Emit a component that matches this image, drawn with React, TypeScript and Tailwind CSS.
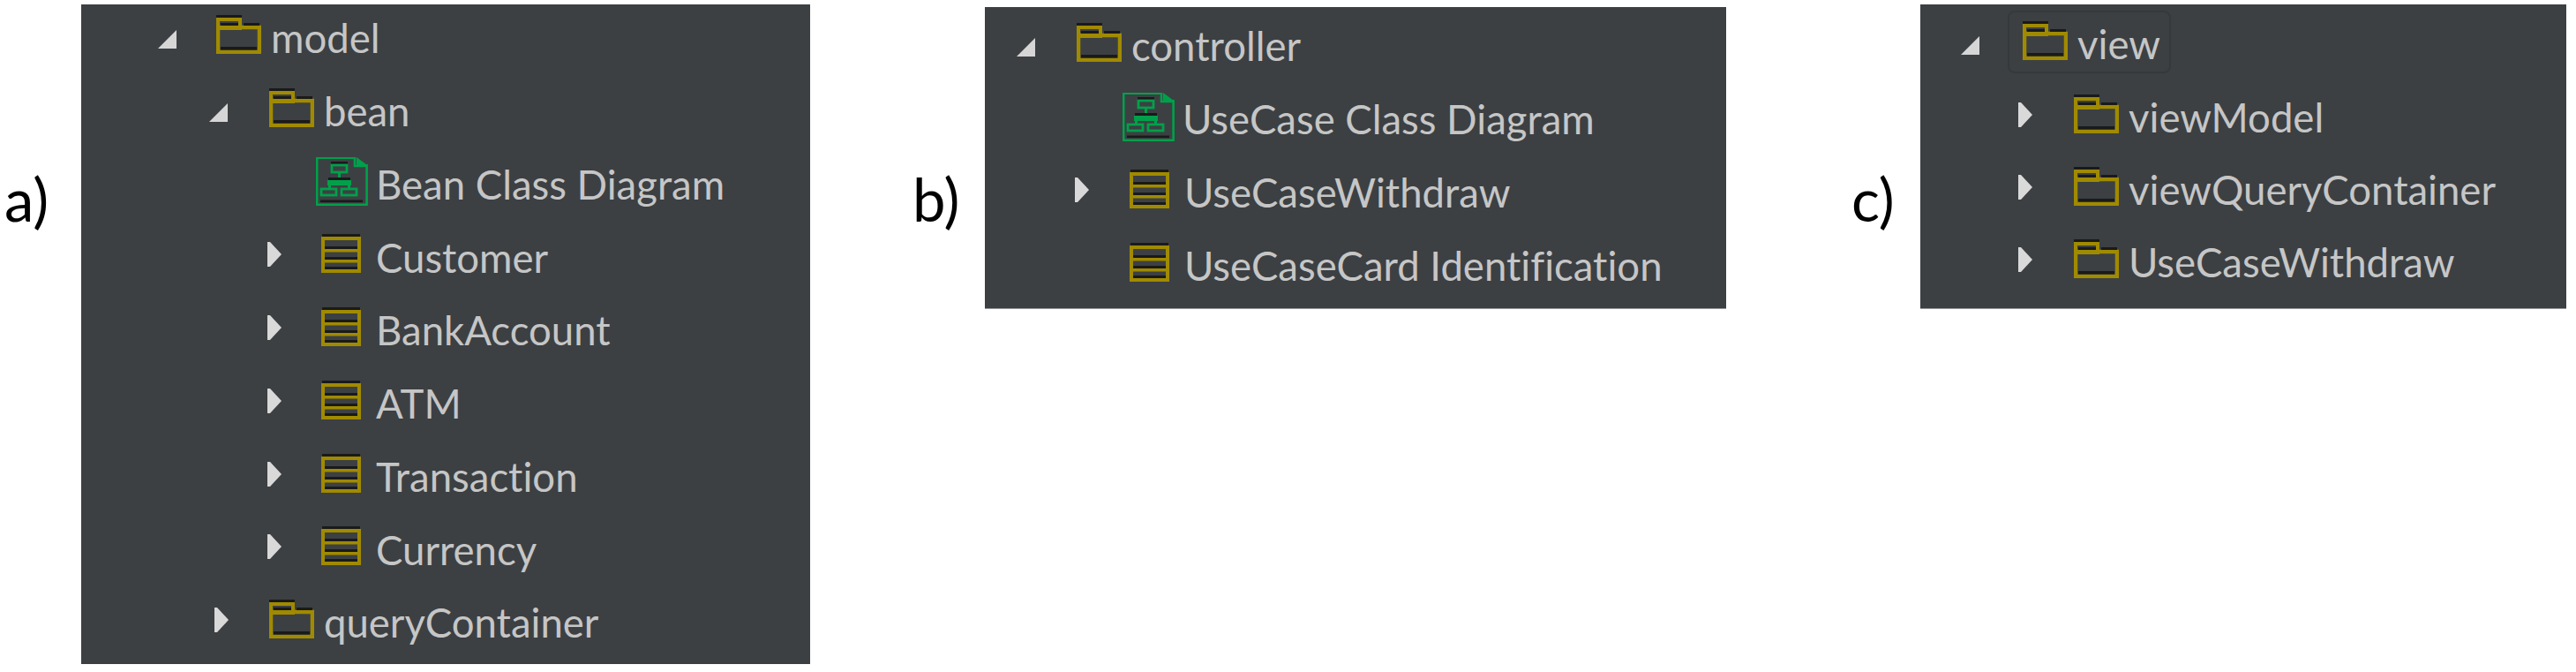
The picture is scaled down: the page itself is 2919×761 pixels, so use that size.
type IconKind = "folder" | "class" | "diagram";

function FolderIcon() {
  return (
    <svg width="51" height="44" viewBox="0 0 51 44" className="shrink-0 -translate-y-[1px]" fill="none">
      <rect x="0" y="0" width="29" height="3" fill="#1a1a1a" />
      <rect x="2" y="5" width="25" height="10" stroke="#a08a00" strokeWidth="4" />
      <rect x="2" y="14" width="47" height="28" stroke="#a08a00" strokeWidth="4.5" />
      <rect x="5" y="9" width="20" height="3" fill="#1a1a1a" />
      <rect x="31" y="9" width="18" height="3" fill="#1a1a1a" />
      <rect x="5" y="36" width="41" height="3.5" fill="#1a1a1a" />
    </svg>
  );
}

function ClassIcon() {
  return (
    <svg width="45" height="44" viewBox="0 0 45 44" className="shrink-0 -translate-y-[1px]" fill="none">
      <rect x="1" y="0" width="43" height="3" fill="#1a1a1a" />
      <rect x="2" y="5" width="41" height="37" stroke="#a08a00" strokeWidth="4" />
      <rect x="3" y="17" width="39" height="3.5" fill="#a08a00" />
      <rect x="3" y="29" width="39" height="3.5" fill="#a08a00" />
      <rect x="4" y="14" width="37" height="3" fill="#1a1a1a" />
      <rect x="4" y="26" width="37" height="3" fill="#1a1a1a" />
      <rect x="4" y="37" width="37" height="3" fill="#1a1a1a" />
    </svg>
  );
}

function DiagramIcon() {
  return (
    <svg width="59" height="55" viewBox="0 0 59 55" className="shrink-0" fill="none">
      <path d="M1.2 0.6H44M44 0V10H58M57.6 8V53.8H1.2V0" stroke="#00a04a" strokeWidth="2.6" />
      <path d="M46 0L58 9H46Z" fill="#00a04a" />
      <rect x="17" y="5" width="19" height="3" fill="#1a1a1a" />
      <rect x="18" y="9" width="17" height="8" stroke="#00a04a" strokeWidth="2.8" />
      <rect x="25" y="17" width="3" height="10" fill="#00a04a" />
      <rect x="14" y="23" width="25" height="3" fill="#1a1a1a" />
      <rect x="13" y="26" width="27" height="6" fill="#00a04a" />
      <rect x="14" y="32" width="3" height="4" fill="#00a04a" />
      <rect x="36" y="32" width="3" height="4" fill="#00a04a" />
      <rect x="6" y="36" width="17" height="7" stroke="#00a04a" strokeWidth="2.8" />
      <rect x="29" y="36" width="17" height="7" stroke="#00a04a" strokeWidth="2.8" />
      <rect x="5" y="48.5" width="48" height="2.6" fill="#1a1a1a" />
    </svg>
  );
}

function TreeIcon({ kind }: { kind: IconKind }) {
  if (kind === "folder") return <FolderIcon />;
  if (kind === "class") return <ClassIcon />;
  return <DiagramIcon />;
}

function Arrow({ open }: { open: boolean }) {
  if (open) {
    return (
      <svg width="22" height="22" viewBox="0 0 22 22" className="translate-y-[4px]">
        <polygon points="21,1 21,22 0,22" fill="#d6d6d6" />
      </svg>
    );
  }
  return (
    <svg width="17" height="28" viewBox="0 0 17 28">
      <polygon points="1,0 4,0 17,14 4,28 1,28" fill="#d9d9d9" />
    </svg>
  );
}

const textGap: Record<IconKind, string> = {
  folder: "ml-[11px]",
  class: "ml-[17px]",
  diagram: "ml-[9px]",
};

const labelText = "whitespace-nowrap text-[45.5px] leading-none pt-[6px] text-[#c6c6c6] [font-variant-ligatures:none]";

interface RowProps {
  indent: string;
  slot?: string;
  arrow?: "open" | "closed";
  icon: IconKind;
  label: string;
  height?: string;
}

function TreeRow({ indent, slot, arrow, icon, label, height = "h-[70px]" }: RowProps) {
  return (
    <div className={`flex items-center shrink-0 ${height} ${indent}`}>
      {slot && <div className={`flex items-center shrink-0 ${slot}`}>{arrow && <Arrow open={arrow === "open"} />}</div>}
      <TreeIcon kind={icon} />
      <span className={`${labelText} ${textGap[icon]}`}>{label}</span>
    </div>
  );
}

function SideLabel({ text, className }: { text: string; className: string }) {
  return (
    <div className={`shrink-0 mt-[180px] text-[67px] leading-[90px] text-black ${className}`}>{text}</div>
  );
}

export default function App() {
  return (
    <div className="flex items-start w-[2919px] h-screen overflow-hidden bg-white font-['Lato',sans-serif]">
      <SideLabel text="a)" className="w-[92px] pl-[5px]" />

      {/* model package */}
      <div className="flex flex-col gap-[12.75px] shrink-0 w-[826px] h-[747px] mt-[5px] bg-[#3c4043]">
        <TreeRow indent="pl-[87px]" slot="w-[66px]" arrow="open" icon="folder" label="model" />
        <TreeRow indent="pl-[145px]" slot="w-[68px]" arrow="open" icon="folder" label="bean" />
        <TreeRow indent="pl-[266px]" icon="diagram" label="Bean Class Diagram" />
        <TreeRow indent="pl-[210px]" slot="w-[62px]" arrow="closed" icon="class" label="Customer" />
        <TreeRow indent="pl-[210px]" slot="w-[62px]" arrow="closed" icon="class" label="BankAccount" />
        <TreeRow indent="pl-[210px]" slot="w-[62px]" arrow="closed" icon="class" label="ATM" />
        <TreeRow indent="pl-[210px]" slot="w-[62px]" arrow="closed" icon="class" label="Transaction" />
        <TreeRow indent="pl-[210px]" slot="w-[62px]" arrow="closed" icon="class" label="Currency" />
        <TreeRow indent="pl-[150px]" slot="w-[63px]" arrow="closed" icon="folder" label="queryContainer" />
      </div>

      <SideLabel text="b)" className="w-[198px] pl-[116px]" />

      {/* controller package */}
      <div className="flex flex-col gap-px shrink-0 w-[840px] h-[342px] mt-[8px] bg-[#3c4043] border-b border-[#9a9a9a]">
        <TreeRow indent="pl-[36px]" slot="w-[68px]" arrow="open" icon="folder" label="controller" height="h-[82px]" />
        <TreeRow indent="pl-[156px]" icon="diagram" label="UseCase Class Diagram" height="h-[82px]" />
        <TreeRow indent="pl-[101px]" slot="w-[63px]" arrow="closed" icon="class" label="UseCaseWithdraw" height="h-[82px]" />
        <TreeRow indent="pl-[164px]" icon="class" label="UseCaseCard Identification" height="h-[82px]" />
      </div>

      <SideLabel text="c)" className="w-[220px] pl-[142px]" />

      {/* view package */}
      <div className="flex flex-col shrink-0 w-[732px] h-[345px] mt-[5px] bg-[#3c4043] border-b border-[#9a9a9a]">
        <div className="flex items-center h-[84px] pl-[46px] shrink-0">
          <div className="flex items-center shrink-0 w-[53px]">
            <Arrow open />
          </div>
          <div className="flex items-center w-[185px] h-[71px] pl-[15px] rounded-lg border-2 border-[#36393b]">
            <TreeIcon kind="folder" />
            <span className={`${labelText} ml-[11px]`}>view</span>
          </div>
        </div>
        <TreeRow indent="pl-[110px]" slot="w-[64px]" arrow="closed" icon="folder" label="viewModel" height="h-[82px]" />
        <TreeRow indent="pl-[110px]" slot="w-[64px]" arrow="closed" icon="folder" label="viewQueryContainer" height="h-[82px]" />
        <TreeRow indent="pl-[110px]" slot="w-[64px]" arrow="closed" icon="folder" label="UseCaseWithdraw" height="h-[82px]" />
      </div>
    </div>
  );
}
